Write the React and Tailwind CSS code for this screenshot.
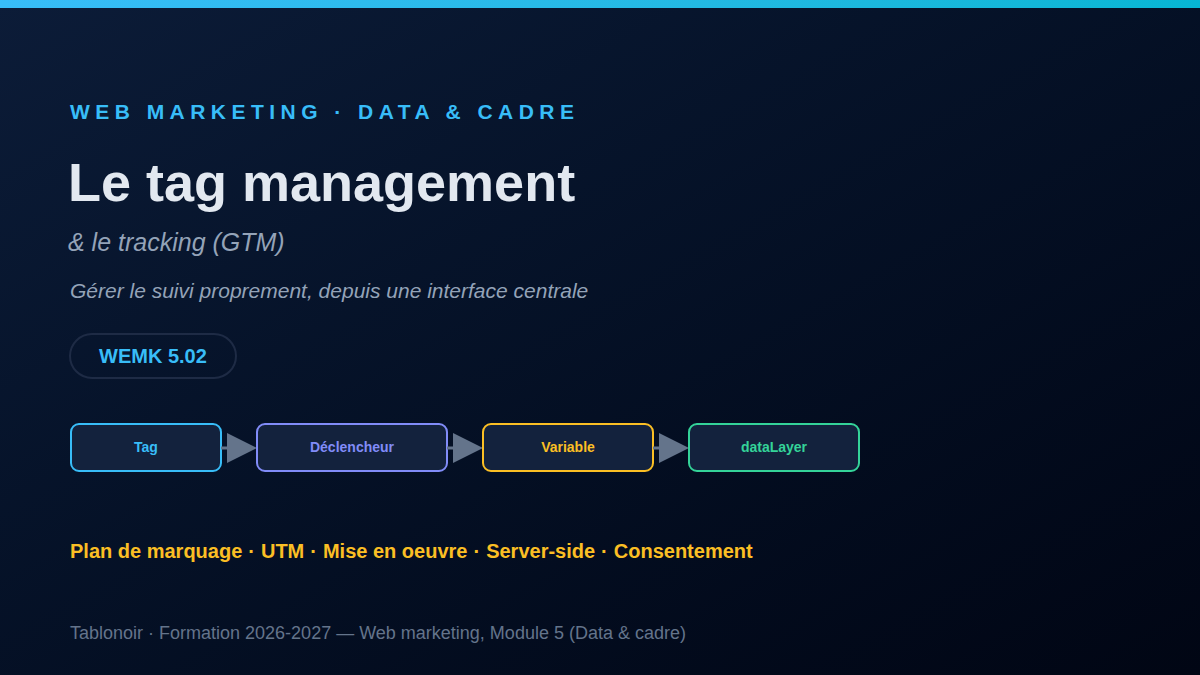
export default function App() {
  const steps = [
    { label: "Tag", w: "w-[152px]", c: "border-[#38bdf8] text-[#38bdf8]" },
    { label: "Déclencheur", w: "w-[192px]", c: "border-[#818cf8] text-[#818cf8]" },
    { label: "Variable", w: "w-[172px]", c: "border-[#fbbf24] text-[#fbbf24]" },
    { label: "dataLayer", w: "w-[172px]", c: "border-[#34d399] text-[#34d399]" },
  ];
  const keywords = ["Plan de marquage", "UTM", "Mise en oeuvre", "Server-side", "Consentement"];

  return (
    <div className="w-[1200px] h-[675px] flex flex-col bg-gradient-to-br from-[#0c1c38] to-[#010614] font-[Liberation_Sans,Arial,sans-serif]">
      <div className="h-2 bg-gradient-to-r from-[#38bdf8] to-[#06b6d4]" />
      <div className="flex flex-col pl-[70px] pt-[92px]">
        <div className="text-[21px] font-bold tracking-[0.26em] text-[#38bdf8] leading-6">
          WEB MARKETING · DATA &amp; CADRE
        </div>
        <h1 className="-ml-[2px] mt-[28px] text-[54px] font-bold text-[#e2e8f0] leading-[60px]">
          Le tag management
        </h1>
        <div className="-ml-[2px] mt-[14px] text-[25px] italic text-[#94a3b8] leading-8">
          &amp; le tracking (GTM)
        </div>
        <div className="mt-[19px] text-[21px] italic text-[#94a3b8] leading-7">
          Gérer le suivi proprement, depuis une interface centrale
        </div>
        <div className="-ml-px mt-[28px] self-start h-[46px] px-[28px] flex items-center rounded-full border-2 border-[#1e2b45] text-[20px] font-bold text-[#38bdf8]">
          WEMK 5.02
        </div>
        <div className="mt-[44px] flex items-center">
          {steps.map((s, i) => (
            <div key={s.label} className="flex items-center">
              {i > 0 && (
                <svg width="36" height="32" viewBox="0 0 36 32" className="-mx-px">
                  <line x1="0" y1="16" x2="10" y2="16" stroke="#64748b" strokeWidth="3" />
                  <polygon points="6,1 36,16 6,31" fill="#64748b" />
                </svg>
              )}
              <div className={`${s.w} h-[49px] flex items-center justify-center rounded-[9px] border-2 bg-[#13223d] text-[14px] font-bold ${s.c}`}>
                {s.label}
              </div>
            </div>
          ))}
        </div>
        <div className="mt-[67px] flex text-[20px] font-bold text-[#fbbf24] leading-6">
          {keywords.map((k, i) => (
            <span key={k}>
              {k}
              {i < keywords.length - 1 && <span className="mx-[6px]">·</span>}
            </span>
          ))}
        </div>
        <div className="mt-[58px] text-[18px] text-[#64748b] leading-6">
          Tablonoir · Formation 2026-2027 — Web marketing, Module 5 (Data &amp; cadre)
        </div>
      </div>
    </div>
  );
}
